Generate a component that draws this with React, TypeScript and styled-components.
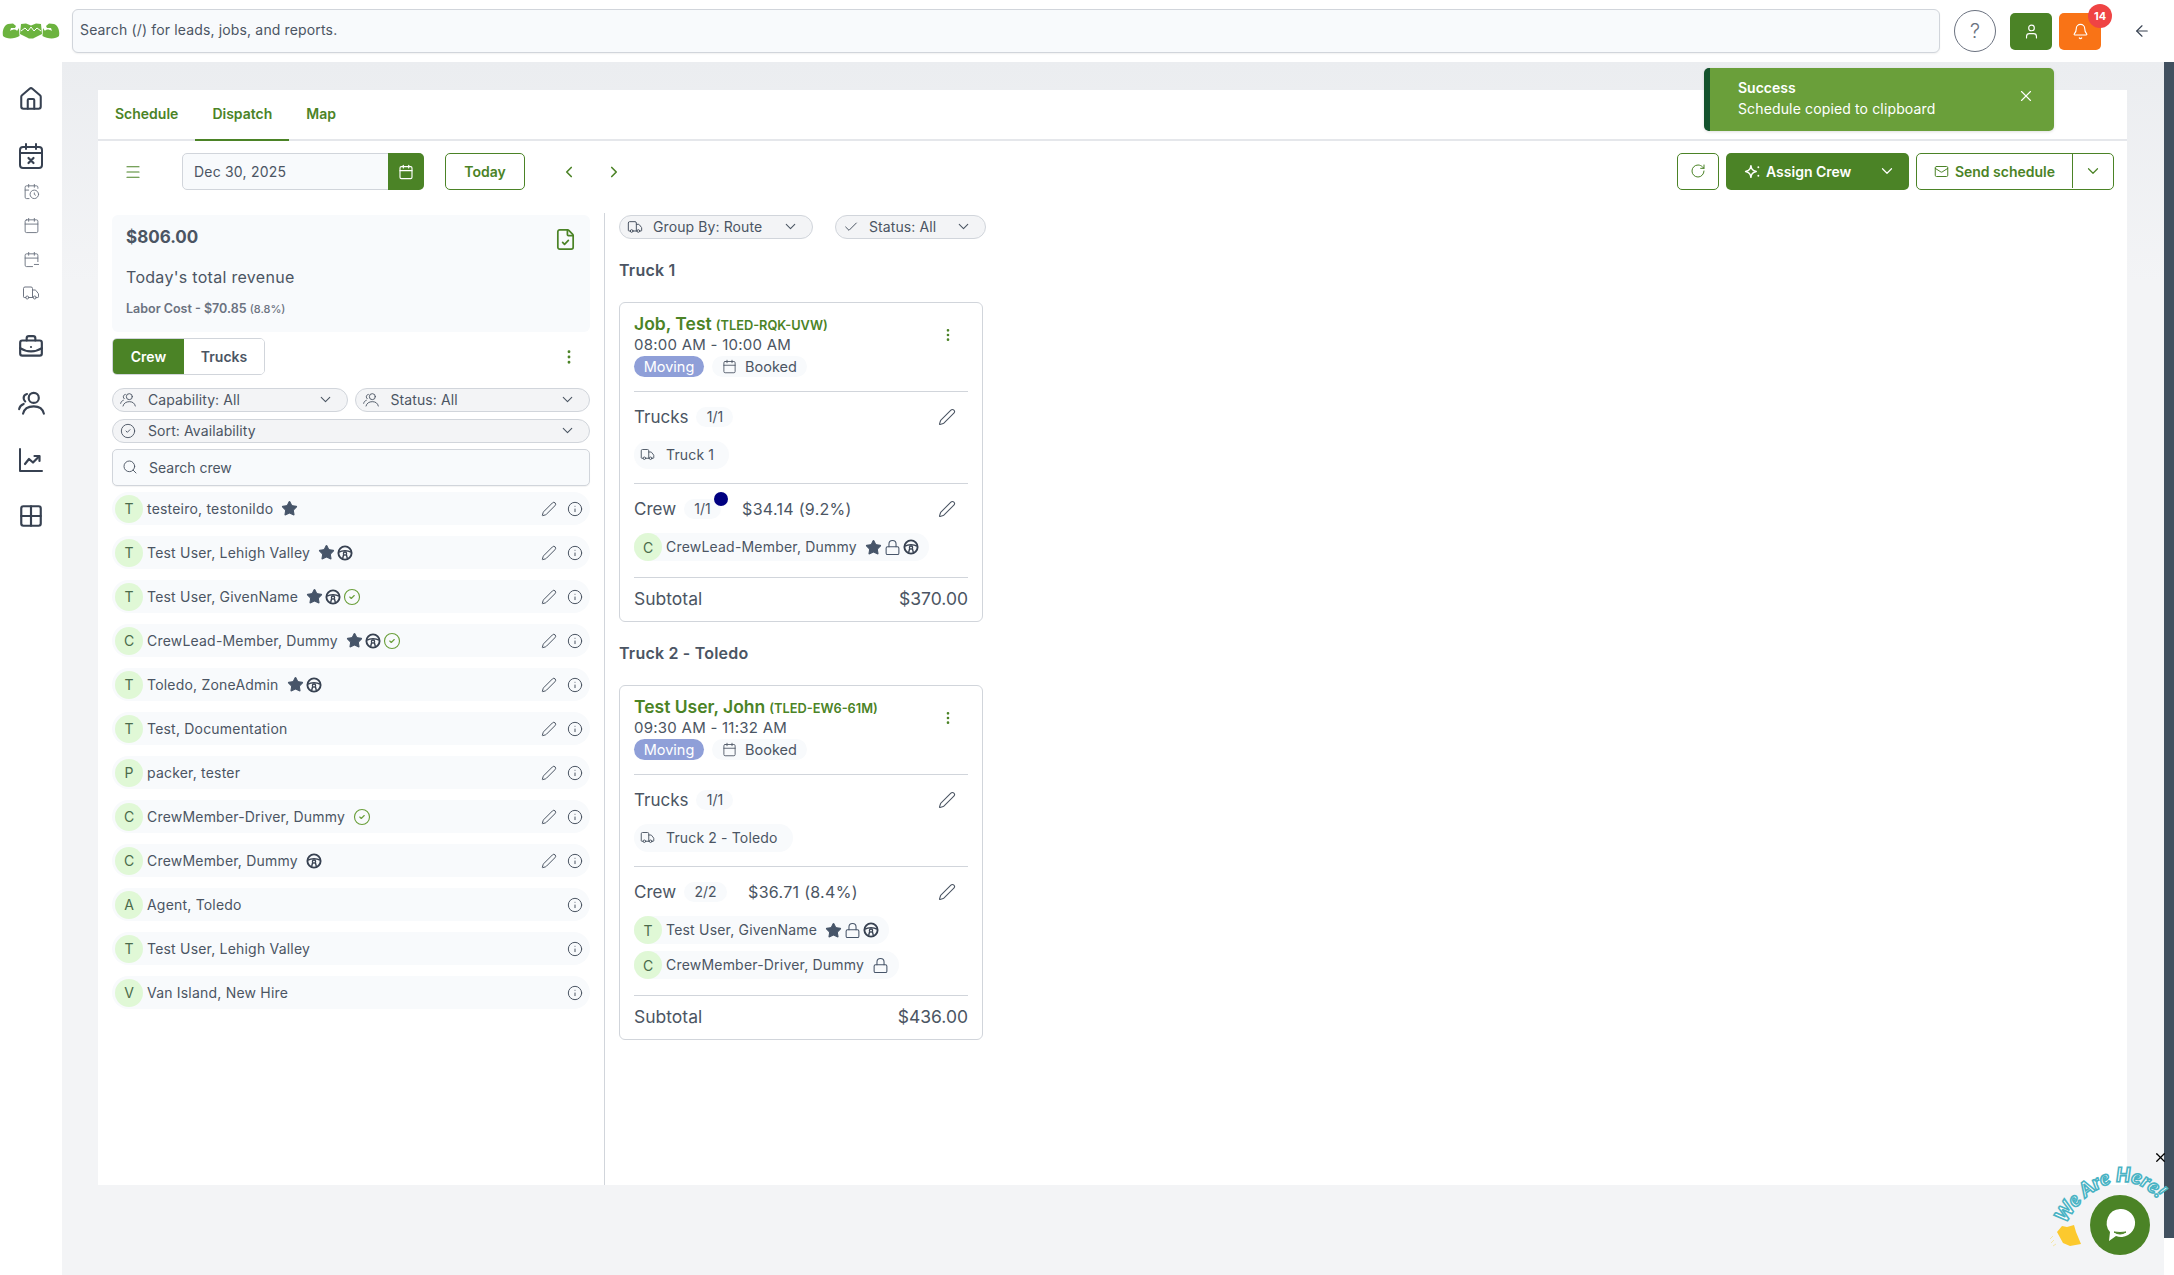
import React from "react";
import styled, { createGlobalStyle } from "styled-components";
import {
  ArrowLeft,
  Bell,
  BriefcaseBusiness,
  Calendar,
  CalendarClock,
  CalendarMinus,
  Check,
  ChevronDown,
  ChevronLeft,
  ChevronRight,
  CircleCheck,
  EllipsisVertical,
  FileCheck,
  Grid2x2,
  House,
  Info,
  Lock,
  Mail,
  Menu,
  Pen,
  RotateCw,
  Search,
  Star,
  Truck,
  User,
  X,
} from "lucide-react";

const GREEN = "#4b8326";
const TEXT = "#4b5563";
const DARK = "#374151";

const GlobalStyle = createGlobalStyle`
  html, body {
    margin: 0;
    padding: 0;
    background: #fff;
  }
  body {
    width: 2174px;
    height: 1275px;
    overflow: hidden;
    font-family: Inter, "Noto Sans", sans-serif;
    color: ${TEXT};
  }
  * {
    box-sizing: border-box;
  }
`;

const Shell = styled.div`
  position: relative;
  display: flex;
  width: 2174px;
  height: 1275px;
`;

const Sidebar = styled.aside`
  width: 62px;
  flex: none;
  display: flex;
  flex-direction: column;
  align-items: center;
`;

const LogoWrap = styled.div`
  height: 62px;
  width: 100%;
  display: flex;
  align-items: center;
  justify-content: center;
`;

const SideNav = styled.nav`
  display: flex;
  flex-direction: column;
  align-items: center;
  padding-top: 23px;
  color: ${DARK};
`;

const SideLarge = styled.div<{ $gap: number }>`
  height: 28px;
  margin-bottom: ${(p) => p.$gap}px;
  display: flex;
  align-items: center;
  justify-content: center;
`;

const SideSmall = styled.div<{ $gap?: number }>`
  height: 16px;
  margin-bottom: ${(p) => p.$gap ?? 18}px;
  display: flex;
  align-items: center;
  justify-content: center;
  color: #6b7280;
`;

const Column = styled.div`
  flex: 1;
  min-width: 0;
  display: flex;
  flex-direction: column;
`;

const TopBar = styled.header`
  height: 62px;
  flex: none;
  display: flex;
  align-items: center;
  padding-left: 10px;
`;

const GlobalSearch = styled.div`
  width: 1868px;
  height: 44px;
  margin-top: -1px;
  padding: 0 0 2px 7px;
  display: flex;
  align-items: center;
  font-size: 14px;
  letter-spacing: 0.15px;
  color: ${TEXT};
  background: #f8fafc;
  border: 1px solid #d1d5db;
  border-radius: 6px;
  box-shadow: 0 1px 2px rgba(0, 0, 0, 0.06);
`;

const HelpButton = styled.div`
  width: 42px;
  height: 42px;
  margin-left: 14px;
  display: flex;
  align-items: center;
  justify-content: center;
  border: 1px solid #6b7280;
  border-radius: 50%;
  font-size: 20px;
  font-weight: 300;
  color: #6b7280;
`;

const SquareButton = styled.div<{ $bg: string; $gap: number }>`
  position: relative;
  width: 42px;
  height: 37px;
  margin-left: ${(p) => p.$gap}px;
  display: flex;
  align-items: center;
  justify-content: center;
  color: #fff;
  background: ${(p) => p.$bg};
  border-radius: 5px;
`;

const Badge = styled.span`
  position: absolute;
  top: -9px;
  right: -11px;
  width: 24px;
  height: 24px;
  display: flex;
  align-items: center;
  justify-content: center;
  font-size: 11px;
  font-weight: 700;
  color: #fff;
  background: #ef4444;
  border-radius: 50%;
`;

const BackButton = styled.div`
  margin-left: 32px;
  display: flex;
  color: ${DARK};
`;

const Body = styled.div`
  flex: 1;
  min-height: 0;
  display: flex;
`;

const Workspace = styled.main`
  flex: 1;
  padding: 28px 37px 0 36px;
  background: linear-gradient(#ebedf0, #f3f4f6 220px);
`;

const RailTrack = styled.div`
  width: 10px;
  flex: none;
`;

const RailThumb = styled.div`
  height: 1176px;
  background: #41505f;
`;

const Panel = styled.section`
  height: 1095px;
  display: flex;
  flex-direction: column;
  background: #fff;
`;

const TabBar = styled.div`
  height: 51px;
  flex: none;
  display: flex;
  border-bottom: 2px solid #e5e7eb;
`;

const TabItem = styled.div<{ $active?: boolean }>`
  height: 51px;
  padding: 0 17px 3px;
  display: flex;
  align-items: center;
  font-size: 14px;
  font-weight: 600;
  color: ${GREEN};
  border-bottom: 2px solid ${(p) => (p.$active ? GREEN : "transparent")};
`;

const Toolbar = styled.div`
  height: 37px;
  margin-top: 12px;
  flex: none;
  display: flex;
  align-items: center;
  padding: 0 13px 0 26px;
  color: ${GREEN};
`;

const DateField = styled.div`
  width: 242px;
  height: 37px;
  margin-left: 40px;
  padding-left: 11px;
  display: flex;
  align-items: center;
  justify-content: space-between;
  font-size: 14px;
  letter-spacing: 0.2px;
  color: ${TEXT};
  background: #f8fafc;
  border: 1px solid #d1d5db;
  border-radius: 5px;
`;

const DateButton = styled.div`
  width: 36px;
  height: 37px;
  margin-right: -1px;
  display: flex;
  align-items: center;
  justify-content: center;
  color: #fff;
  background: ${GREEN};
  border-radius: 0 5px 5px 0;
`;

const OutlineButton = styled.div`
  height: 37px;
  padding-bottom: 1px;
  display: flex;
  align-items: center;
  justify-content: center;
  font-size: 14px;
  font-weight: 600;
  color: ${GREEN};
  background: #fff;
  border: 1px solid ${GREEN};
  border-radius: 5px;
`;

const TodayButton = styled(OutlineButton)`
  width: 80px;
  margin-left: 21px;
`;

const Pager = styled.div`
  display: flex;
  align-items: center;
  gap: 27px;
  margin-left: 35px;
`;

const Spacer = styled.div`
  flex: 1;
`;

const RefreshButton = styled(OutlineButton)`
  width: 42px;
`;

const AssignButton = styled.div`
  width: 183px;
  height: 37px;
  margin-left: 7px;
  padding: 0 13px 1px 18px;
  display: flex;
  align-items: center;
  gap: 5px;
  font-size: 14px;
  font-weight: 600;
  color: #fff;
  background: ${GREEN};
  border-radius: 5px;
`;

const SendGroup = styled(OutlineButton)`
  width: 198px;
  margin-left: 7px;
`;

const SendMain = styled.div`
  width: 156px;
  height: 100%;
  display: flex;
  align-items: center;
  justify-content: center;
  gap: 6px;
  border-right: 1px solid ${GREEN};
`;

const SendCaret = styled.div`
  flex: 1;
  display: flex;
  align-items: center;
  justify-content: center;
`;

const Split = styled.div`
  flex: 1;
  min-height: 0;
  margin-top: 23px;
  display: flex;
`;

const LeftPane = styled.div`
  width: 507px;
  flex: none;
  padding: 2px 14px 0 14px;
  border-right: 1px solid #d1d5db;
`;

const RevenueCard = styled.div`
  position: relative;
  height: 117px;
  padding: 11px 14px;
  background: #f8fafc;
  border-radius: 6px;
`;

const RevenueValue = styled.div`
  font-size: 17px;
  line-height: 22px;
  font-weight: 700;
  color: ${TEXT};
`;

const RevenueLabel = styled.div`
  margin-top: 18px;
  font-size: 16px;
  line-height: 22px;
  letter-spacing: 0.3px;
  color: ${TEXT};
`;

const LaborCost = styled.div`
  margin-top: 12px;
  font-size: 12.5px;
  line-height: 18px;
  font-weight: 600;
  color: #6b7280;

  small {
    font-size: 11px;
    font-weight: 500;
  }
`;

const RevenueIcon = styled.div`
  position: absolute;
  top: 13px;
  right: 13px;
  display: flex;
  color: ${GREEN};
`;

const SegmentRow = styled.div`
  height: 37px;
  margin-top: 6px;
  padding-right: 12px;
  display: flex;
  align-items: center;
  justify-content: space-between;
  color: ${GREEN};
`;

const Segment = styled.div`
  display: flex;
  height: 37px;
  border: 1px solid #d1d5db;
  border-radius: 5px;
  overflow: hidden;
`;

const SegmentItem = styled.div<{ $on?: boolean; $w: number }>`
  width: ${(p) => p.$w}px;
  display: flex;
  align-items: center;
  justify-content: center;
  font-size: 14px;
  font-weight: 600;
  color: ${(p) => (p.$on ? "#fff" : TEXT)};
  background: ${(p) => (p.$on ? GREEN : "#fff")};
`;

const FilterGrid = styled.div`
  margin-top: 13px;
  display: grid;
  grid-template-columns: 1fr 1fr;
  gap: 7px;
`;

const Pill = styled.div<{ $wide?: boolean; $w?: number; $gap?: number }>`
  height: 24px;
  grid-column: ${(p) => (p.$wide ? "1 / -1" : "auto")};
  ${(p) => (p.$w ? `width: ${p.$w}px;` : "")}
  padding: 0 13px 1px 7px;
  display: flex;
  align-items: center;
  font-size: 14px;
  letter-spacing: 0.1px;
  color: ${TEXT};
  background: #f3f4f6;
  border: 1px solid #d1d5db;
  border-radius: 12px;

  span {
    margin-left: ${(p) => p.$gap ?? 12}px;
    flex: 1;
  }
`;

const CrewSearch = styled.div`
  height: 37px;
  margin-top: 6px;
  padding: 0 0 1px 9px;
  display: flex;
  align-items: center;
  gap: 11px;
  font-size: 14px;
  color: ${TEXT};
  background: #f8fafc;
  border: 1px solid #d1d5db;
  border-radius: 5px;
  box-shadow: 0 1px 1px rgba(0, 0, 0, 0.05);
`;

const CrewList = styled.div`
  margin-top: 6px;
  display: flex;
  flex-direction: column;
  gap: 11px;
`;

const CrewRow = styled.div`
  height: 33px;
  padding: 0 7px 0 3px;
  display: flex;
  align-items: center;
  background: #f8fafc;
  border-radius: 17px;
`;

const Avatar = styled.div`
  width: 28px;
  height: 28px;
  flex: none;
  display: flex;
  align-items: center;
  justify-content: center;
  font-size: 14px;
  color: #4b6b4b;
  background: #e0f8d6;
  border-radius: 50%;
`;

const CrewName = styled.div`
  margin-left: 4px;
  padding-bottom: 1px;
  font-size: 14px;
  letter-spacing: 0.2px;
  color: ${TEXT};
`;

const Marks = styled.div`
  margin-left: 8px;
  display: flex;
  align-items: center;
  gap: 2px;
  color: #475569;
`;

const RowActions = styled.div`
  margin-left: auto;
  display: flex;
  align-items: center;
  gap: 10px;
  color: ${TEXT};
`;

const RightPane = styled.div`
  flex: 1;
  padding: 2px 0 0 14px;
`;

const FilterRow = styled.div`
  display: flex;
  gap: 22px;
`;

const RouteTitle = styled.h3`
  margin: 20px 0 0;
  font-size: 16px;
  line-height: 22px;
  font-weight: 600;
  letter-spacing: 0.2px;
  color: ${TEXT};
`;

const JobCard = styled.article`
  width: 364px;
  margin-top: 21px;
  margin-bottom: 19px;
  padding: 11px 14px 0 14px;
  background: #fff;
  border: 1px solid #d1d5db;
  border-radius: 6px;
`;

const JobHead = styled.div`
  position: relative;
  height: 78px;
  padding-top: 1px;
  border-bottom: 1px solid #d1d5db;
`;

const JobTitle = styled.div`
  font-size: 17.5px;
  line-height: 18px;
  font-weight: 600;
  color: ${GREEN};

  small {
    margin-left: 4px;
    font-size: 12.8px;
    font-weight: 600;
  }
`;

const JobTime = styled.div`
  font-size: 15px;
  line-height: 19px;
  letter-spacing: 0.25px;
  color: ${TEXT};
`;

const JobTags = styled.div`
  margin-top: 2px;
  display: flex;
  gap: 8px;
`;

const MovingTag = styled.div`
  width: 70px;
  height: 21px;
  padding-bottom: 1px;
  display: flex;
  align-items: center;
  justify-content: center;
  font-size: 14.5px;
  color: #fff;
  background: #8f9fd8;
  border-radius: 11px;
`;

const StatusTag = styled.div`
  height: 21px;
  padding: 0 10px 1px;
  display: flex;
  align-items: center;
  gap: 8px;
  font-size: 14.5px;
  color: ${TEXT};
  background: #f8fafc;
  border-radius: 11px;
`;

const JobMenu = styled.div`
  position: absolute;
  top: 13px;
  right: 12px;
  display: flex;
  color: ${GREEN};
`;

const SectionHead = styled.div`
  position: relative;
  height: 49px;
  display: flex;
  align-items: center;
  font-size: 17px;
  color: ${TEXT};
`;

const SectionEdit = styled.div`
  margin-left: auto;
  margin-right: 12px;
  display: flex;
  color: ${TEXT};
`;

const CountPill = styled.div<{ $gap: number; $w: number }>`
  position: relative;
  width: ${(p) => p.$w}px;
  height: 20px;
  margin-left: ${(p) => p.$gap}px;
  display: flex;
  align-items: center;
  justify-content: center;
  font-size: 14px;
  color: ${TEXT};
  background: #f8fafc;
  border-radius: 10px;
`;

const PingDot = styled.span`
  position: absolute;
  top: -7px;
  right: -7px;
  width: 14px;
  height: 14px;
  background: #000080;
  border-radius: 50%;
`;

const CostText = styled.div<{ $gap: number }>`
  margin-left: ${(p) => p.$gap}px;
  font-size: 16px;
  letter-spacing: 0.3px;
  color: ${TEXT};
`;

const ChipStack = styled.div<{ $pad: number }>`
  padding-bottom: ${(p) => p.$pad}px;
  display: flex;
  flex-direction: column;
  gap: 7px;
  align-items: flex-start;
  border-bottom: 1px solid #d1d5db;
`;

const TruckChip = styled.div`
  height: 28px;
  padding: 0 15px 1px 6px;
  display: flex;
  align-items: center;
  gap: 11px;
  font-size: 14px;
  letter-spacing: 0.15px;
  color: ${TEXT};
  background: #f8fafc;
  border-radius: 14px;
`;

const MemberChip = styled.div`
  height: 28px;
  padding-right: 10px;
  display: flex;
  align-items: center;
  font-size: 14px;
  color: ${TEXT};
  background: #f8fafc;
  border-radius: 14px;
`;

const Subtotal = styled.div`
  height: 43px;
  padding-bottom: 2px;
  display: flex;
  align-items: center;
  justify-content: space-between;
  font-size: 17.5px;
  color: ${TEXT};
`;

const Toast = styled.div`
  position: absolute;
  top: 68px;
  left: 1704px;
  width: 350px;
  height: 63px;
  padding: 9px 0 0 28px;
  color: #fff;
  background: #6a9f3a;
  border-left: 6px solid #14532d;
  border-radius: 5px;
  box-shadow: 0 1px 3px rgba(0, 0, 0, 0.12);
`;

const ToastTitle = styled.div`
  font-size: 14px;
  line-height: 21px;
  font-weight: 600;
`;

const ToastText = styled.div`
  font-size: 14px;
  line-height: 21px;
  letter-spacing: 0.14px;
`;

const ToastClose = styled.div`
  position: absolute;
  top: 19px;
  right: 19px;
  display: flex;
`;

const WidgetClose = styled.div`
  position: absolute;
  top: 1150px;
  left: 2153px;
  display: flex;
  color: #000;
`;

const ChatWidget = styled.div`
  position: absolute;
  top: 1160px;
  left: 2040px;
  width: 134px;
  height: 115px;

  svg {
    overflow: visible;
  }
`;

const SteeringIcon = () => (
  <svg width="16" height="16" viewBox="0 0 16 16" fill="none" stroke="#374151">
    <circle cx="8" cy="8" r="6.6" strokeWidth="1.9" />
    <path d="M2 7.2 C5 5.2 11 5.2 14 7.2" strokeWidth="1.6" />
    <circle cx="8" cy="8.6" r="1.6" strokeWidth="1.3" />
    <path d="M6.6 9.8 L5.6 13.6 M9.4 9.8 L10.4 13.6" strokeWidth="1.4" />
  </svg>
);

const CalendarCross = () => (
  <svg width="26" height="28" viewBox="0 0 26 28" fill="none" stroke="currentColor" strokeWidth="2" strokeLinecap="round" strokeLinejoin="round">
    <rect x="2" y="5" width="22" height="21" rx="3" />
    <path d="M2 11 H24 M8 2 V7 M18 2 V7" />
    <path d="M10.5 16 L15.5 21 M15.5 16 L10.5 21" strokeWidth="2.2" />
  </svg>
);

const CrewGroup = ({ size, weight }: { size: number; weight: number }) => (
  <svg width={size} height={size} viewBox="0 0 24 24" fill="none" stroke="currentColor" strokeWidth={weight} strokeLinecap="round" strokeLinejoin="round">
    <circle cx="14" cy="7" r="4.5" />
    <path d="M4.5 21 C5.5 16.5 9.5 14.5 14 14.5 C18.5 14.5 22 16.5 23 21" />
    <path d="M8 3.6 C6 4 5 5.6 5 7.2 C5 8.4 5.5 9.4 6.4 10.2" />
    <path d="M1 17 C1.4 14.8 2.8 13.2 5 12.4" />
  </svg>
);

const TrendChart = () => (
  <svg width="26" height="26" viewBox="0 0 26 26" fill="none" stroke="currentColor" strokeWidth="2" strokeLinecap="round" strokeLinejoin="round">
    <path d="M2 2 V24 H24" />
    <path d="M7 17 L11 12 L15 15.5 L21 9.5" strokeWidth="2.2" />
    <path d="M16.5 9 H21.5 V14" strokeWidth="2.2" />
  </svg>
);

const Spark = () => (
  <svg width="17" height="17" viewBox="0 0 16 16" fill="none" stroke="currentColor" strokeWidth="1.4" strokeLinejoin="round">
    <path d="M6.5 2.5 C7 6 8 7 11.5 8 C8 9 7 10 6.5 13.5 C6 10 5 9 1.5 8 C5 7 6 6 6.5 2.5 Z" />
    <circle cx="13.5" cy="4" r="0.9" fill="currentColor" stroke="none" />
    <circle cx="13.5" cy="12" r="0.9" fill="currentColor" stroke="none" />
  </svg>
);

const Logo = () => (
  <svg width="58" height="16" viewBox="0 0 58 16" fill="#6cb33f">
    <path d="M1 13 C0 8 2 2 6 1 L11 0.5 L14 3 L13 5 L9 5 L8 8 C11 6 14 6 15 8 L17 5 L17.5 13 C13 16 4 16.5 1 13 Z" />
    <path d="M19 1 L24 0.5 L29 2.5 L34 0.5 L39 1 L40 11 L31 15.5 L27 15.5 L18 11 Z" />
    <path d="M57 13 C58 8 56 2 52 1 L47 0.5 L44 3 L45 5 L49 5 L50 8 C47 6 44 6 43 8 L41 5 L40.5 13 C45 16 54 16.5 57 13 Z" />
    <path d="M19 8 L23 5 L26 8 L29 4 L32 8 L35 5 L39 8" fill="none" stroke="#fff" strokeWidth="1" />
  </svg>
);

type Mark = "star" | "wheel" | "ok" | "lock";

const MarkIcon = ({ kind }: { kind: Mark }) => {
  if (kind === "star") return <Star size={17} fill="#475569" strokeWidth={1.5} />;
  if (kind === "wheel") return <SteeringIcon />;
  if (kind === "lock") return <Lock size={17} strokeWidth={1.5} />;
  return <CircleCheck size={18} color="#6a9f3a" strokeWidth={1.5} />;
};

const crew: { name: string; marks: Mark[]; edit: boolean }[] = [
  { name: "testeiro, testonildo", marks: ["star"], edit: true },
  { name: "Test User, Lehigh Valley", marks: ["star", "wheel"], edit: true },
  { name: "Test User, GivenName", marks: ["star", "wheel", "ok"], edit: true },
  { name: "CrewLead-Member, Dummy", marks: ["star", "wheel", "ok"], edit: true },
  { name: "Toledo, ZoneAdmin", marks: ["star", "wheel"], edit: true },
  { name: "Test, Documentation", marks: [], edit: true },
  { name: "packer, tester", marks: [], edit: true },
  { name: "CrewMember-Driver, Dummy", marks: ["ok"], edit: true },
  { name: "CrewMember, Dummy", marks: ["wheel"], edit: true },
  { name: "Agent, Toledo", marks: [], edit: false },
  { name: "Test User, Lehigh Valley", marks: [], edit: false },
  { name: "Van Island, New Hire", marks: [], edit: false },
];

const jobs = [
  {
    route: "Truck 1",
    name: "Job, Test",
    code: "(TLED-RQK-UVW)",
    time: "08:00 AM - 10:00 AM",
    crewCount: "1/1",
    countWidth: 37,
    crewPing: true,
    cost: "$34.14 (9.2%)",
    members: [{ name: "CrewLead-Member, Dummy", marks: ["star", "lock", "wheel"] as Mark[] }],
    subtotal: "$370.00",
  },
  {
    route: "Truck 2 - Toledo",
    name: "Test User, John",
    code: "(TLED-EW6-61M)",
    time: "09:30 AM - 11:32 AM",
    crewCount: "2/2",
    countWidth: 43,
    crewPing: false,
    cost: "$36.71 (8.4%)",
    members: [
      { name: "Test User, GivenName", marks: ["star", "lock", "wheel"] as Mark[] },
      { name: "CrewMember-Driver, Dummy", marks: ["lock"] as Mark[] },
    ],
    subtotal: "$436.00",
  },
];

const App = () => {
  return (
    <Shell>
      <GlobalStyle />
      <Sidebar>
        <LogoWrap>
          <Logo />
        </LogoWrap>
        <SideNav>
          <SideLarge $gap={29}>
            <House size={26} strokeWidth={1.9} />
          </SideLarge>
          <SideLarge $gap={13}>
            <CalendarCross />
          </SideLarge>
          <SideSmall>
            <CalendarClock size={17} strokeWidth={1.3} />
          </SideSmall>
          <SideSmall>
            <Calendar size={17} strokeWidth={1.3} />
          </SideSmall>
          <SideSmall>
            <CalendarMinus size={17} strokeWidth={1.3} />
          </SideSmall>
          <SideSmall $gap={32}>
            <Truck size={18} strokeWidth={1.3} />
          </SideSmall>
          <SideLarge $gap={28}>
            <BriefcaseBusiness size={26} strokeWidth={2} />
          </SideLarge>
          <SideLarge $gap={29}>
            <CrewGroup size={27} weight={1.9} />
          </SideLarge>
          <SideLarge $gap={28}>
            <TrendChart />
          </SideLarge>
          <SideLarge $gap={0}>
            <Grid2x2 size={26} strokeWidth={2} />
          </SideLarge>
        </SideNav>
      </Sidebar>

      <Column>
        <TopBar>
          <GlobalSearch>Search (/) for leads, jobs, and reports.</GlobalSearch>
          <HelpButton>?</HelpButton>
          <SquareButton $bg={GREEN} $gap={14}>
            <User size={17} strokeWidth={1.6} />
          </SquareButton>
          <SquareButton $bg="#f97316" $gap={7}>
            <Bell size={17} strokeWidth={1.6} />
            <Badge>14</Badge>
          </SquareButton>
          <BackButton>
            <ArrowLeft size={18} strokeWidth={1.5} />
          </BackButton>
        </TopBar>

        <Body>
          <Workspace>
            <Panel>
              <TabBar>
                <TabItem>Schedule</TabItem>
                <TabItem $active>Dispatch</TabItem>
                <TabItem>Map</TabItem>
              </TabBar>

              <Toolbar>
                <Menu size={18} strokeWidth={1.6} />
                <DateField>
                  Dec 30, 2025
                  <DateButton>
                    <Calendar size={16} strokeWidth={1.7} />
                  </DateButton>
                </DateField>
                <TodayButton>Today</TodayButton>
                <Pager>
                  <ChevronLeft size={18} strokeWidth={2.2} />
                  <ChevronRight size={18} strokeWidth={2.2} />
                </Pager>
                <Spacer />
                <RefreshButton>
                  <RotateCw size={16} strokeWidth={1.5} />
                </RefreshButton>
                <AssignButton>
                  <Spark />
                  Assign Crew
                  <Spacer />
                  <ChevronDown size={18} strokeWidth={1.6} />
                </AssignButton>
                <SendGroup>
                  <SendMain>
                    <Mail size={15} strokeWidth={1.6} />
                    Send schedule
                  </SendMain>
                  <SendCaret>
                    <ChevronDown size={18} strokeWidth={1.6} />
                  </SendCaret>
                </SendGroup>
              </Toolbar>

              <Split>
                <LeftPane>
                  <RevenueCard>
                    <RevenueValue>$806.00</RevenueValue>
                    <RevenueLabel>Today's total revenue</RevenueLabel>
                    <LaborCost>
                      Labor Cost - $70.85 <small>(8.8%)</small>
                    </LaborCost>
                    <RevenueIcon>
                      <FileCheck size={23} strokeWidth={1.8} />
                    </RevenueIcon>
                  </RevenueCard>

                  <SegmentRow>
                    <Segment>
                      <SegmentItem $on $w={71}>
                        Crew
                      </SegmentItem>
                      <SegmentItem $w={80}>Trucks</SegmentItem>
                    </Segment>
                    <EllipsisVertical size={18} strokeWidth={1.8} />
                  </SegmentRow>

                  <FilterGrid>
                    <Pill>
                      <CrewGroup size={16} weight={1.4} />
                      <span>Capability: All</span>
                      <ChevronDown size={17} strokeWidth={1.5} />
                    </Pill>
                    <Pill>
                      <CrewGroup size={16} weight={1.4} />
                      <span>Status: All</span>
                      <ChevronDown size={17} strokeWidth={1.5} />
                    </Pill>
                    <Pill $wide>
                      <CircleCheck size={16} strokeWidth={1.4} />
                      <span>Sort: Availability</span>
                      <ChevronDown size={17} strokeWidth={1.5} />
                    </Pill>
                  </FilterGrid>

                  <CrewSearch>
                    <Search size={16} strokeWidth={1.4} />
                    Search crew
                  </CrewSearch>

                  <CrewList>
                    {crew.map((member, index) => (
                      <CrewRow key={index}>
                        <Avatar>{member.name[0].toUpperCase()}</Avatar>
                        <CrewName>{member.name}</CrewName>
                        <Marks>
                          {member.marks.map((mark) => (
                            <MarkIcon kind={mark} key={mark} />
                          ))}
                        </Marks>
                        <RowActions>
                          {member.edit && <Pen size={16} strokeWidth={1.5} />}
                          <Info size={16} strokeWidth={1.5} />
                        </RowActions>
                      </CrewRow>
                    ))}
                  </CrewList>
                </LeftPane>

                <RightPane>
                  <FilterRow>
                    <Pill $w={194} $gap={10}>
                      <Truck size={16} strokeWidth={1.5} />
                      <span>Group By: Route</span>
                      <ChevronDown size={17} strokeWidth={1.5} />
                    </Pill>
                    <Pill $w={151} $gap={10}>
                      <Check size={16} strokeWidth={1.5} />
                      <span>Status: All</span>
                      <ChevronDown size={17} strokeWidth={1.5} />
                    </Pill>
                  </FilterRow>

                  {jobs.map((job) => (
                    <React.Fragment key={job.code}>
                      <RouteTitle>{job.route}</RouteTitle>
                      <JobCard>
                        <JobHead>
                          <JobTitle>
                            {job.name}
                            <small>{job.code}</small>
                          </JobTitle>
                          <JobTime>{job.time}</JobTime>
                          <JobTags>
                            <MovingTag>Moving</MovingTag>
                            <StatusTag>
                              <Calendar size={15} strokeWidth={1.4} />
                              Booked
                            </StatusTag>
                          </JobTags>
                          <JobMenu>
                            <EllipsisVertical size={16} strokeWidth={2} />
                          </JobMenu>
                        </JobHead>

                        <SectionHead>
                          Trucks
                          <CountPill $gap={8} $w={37}>
                            1/1
                          </CountPill>
                          <SectionEdit>
                            <Pen size={18} strokeWidth={1.4} />
                          </SectionEdit>
                        </SectionHead>
                        <ChipStack $pad={14}>
                          <TruckChip>
                            <Truck size={15} strokeWidth={1.5} />
                            {job.route}
                          </TruckChip>
                        </ChipStack>

                        <SectionHead>
                          Crew
                          <CountPill $gap={8} $w={job.countWidth}>
                            {job.crewCount}
                            {job.crewPing && <PingDot />}
                          </CountPill>
                          <CostText $gap={21}>{job.cost}</CostText>
                          <SectionEdit>
                            <Pen size={18} strokeWidth={1.4} />
                          </SectionEdit>
                        </SectionHead>
                        <ChipStack $pad={16}>
                          {job.members.map((member) => (
                            <MemberChip key={member.name}>
                              <Avatar>{member.name[0]}</Avatar>
                              <CrewName>{member.name}</CrewName>
                              <Marks>
                                {member.marks.map((mark) => (
                                  <MarkIcon kind={mark} key={mark} />
                                ))}
                              </Marks>
                            </MemberChip>
                          ))}
                        </ChipStack>

                        <Subtotal>
                          <span>Subtotal</span>
                          <span>{job.subtotal}</span>
                        </Subtotal>
                      </JobCard>
                    </React.Fragment>
                  ))}
                </RightPane>
              </Split>
            </Panel>
          </Workspace>
          <RailTrack>
            <RailThumb />
          </RailTrack>
        </Body>
      </Column>

      <Toast>
        <ToastTitle>Success</ToastTitle>
        <ToastText>Schedule copied to clipboard</ToastText>
        <ToastClose>
          <X size={18} strokeWidth={1.5} />
        </ToastClose>
      </Toast>

      <WidgetClose>
        <X size={15} strokeWidth={2} />
      </WidgetClose>

      <ChatWidget>
        <svg width="134" height="115" viewBox="0 0 134 115">
          <defs>
            <path id="arc" d="M26 64 C40 36 66 20 86 22 C102 23 118 34 130 58" />
          </defs>
          <text
            fontFamily="Lato, sans-serif"
            fontWeight="900"
            fontStyle="italic"
            fontSize="20"
            fill="#fff"
            stroke="#49b3c4"
            strokeWidth="1.6"
          >
            <textPath href="#arc" textLength="114" lengthAdjust="spacing">
              We Are Here!
            </textPath>
          </text>
          <circle cx="80" cy="65" r="30" fill={GREEN} />
          <path d="M80 49 A14 14 0 1 1 76 76 L69 81 L70 72 A14 14 0 0 1 80 49 Z" fill="#fff" />
          <path d="M74 72 Q80 76 86 72 Q80 73 74 72 Z" fill={GREEN} stroke={GREEN} />
          <path
            d="M17 72 L22 66 L27 67 L34 65 L36 72 L41 84 L30 86 L23 83 Z"
            fill="#fcc92e"
          />
          <path d="M13 76 L10 79 M14 80 L11 83 M16 84 L13 86" stroke="#f3e6a8" strokeWidth="1" />
        </svg>
      </ChatWidget>
    </Shell>
  );
};

export default App;
